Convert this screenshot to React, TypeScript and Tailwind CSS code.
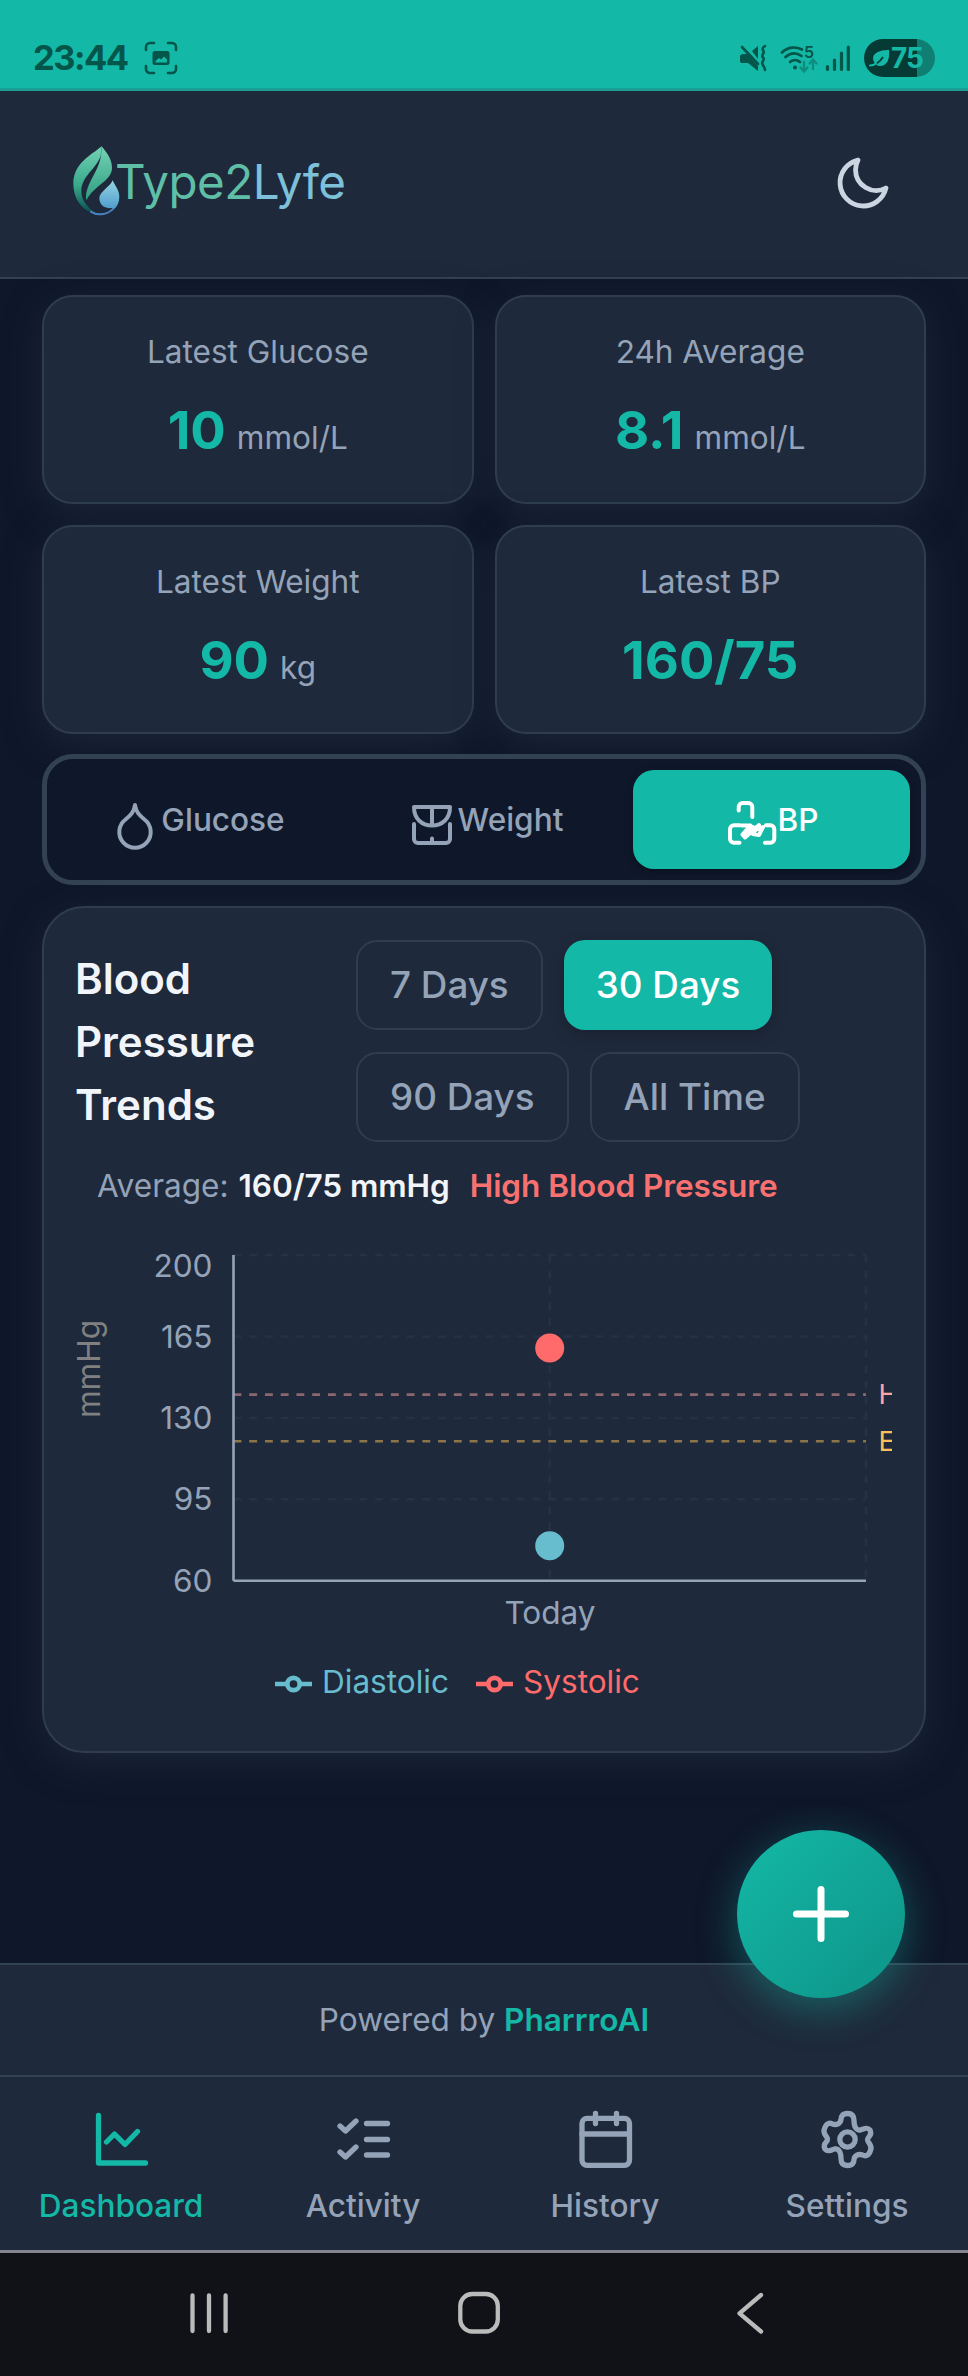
import type { ReactNode } from "react";

function StatusBar() {
  return (
    <div className="flex h-[91px] items-center justify-between border-b-[3px] border-[#1b9f94] bg-[#14b8a6] pt-[28px] pr-[33px] pl-[33px] text-[#04554a]">
      <div className="flex items-center">
        <span className="w-[111px] text-[34.5px] leading-[36px] font-bold tracking-[-1.5px]">23:44</span>
        <svg width="34" height="34" viewBox="0 0 34 34" fill="none" stroke="currentColor" strokeWidth="2.6" strokeLinecap="round">
          <path d="M2 9V6a4 4 0 0 1 4-4h4M24 2h4a4 4 0 0 1 4 4v3M32 25v3a4 4 0 0 1-4 4h-4M10 32H6a4 4 0 0 1-4-4v-3" />
          <path
            d="M11 10h12a2.5 2.5 0 0 1 2.5 2.500v9a2.500 2.500 0 0 1-2.500 2.500h-12a2.500 2.500 0 0 1-2.500-2.500v-9a2.500 2.500 0 0 1 2.500-2.500zM11.500 21.500h11.500v-3l-3-3-3 3-2-1.500-3.500 3z"
            fill="currentColor"
            fillRule="evenodd"
            stroke="none"
          />
        </svg>
      </div>
      <div className="flex items-center">
        <svg width="28" height="28" viewBox="0 0 28 28" fill="none" stroke="currentColor">
          <path d="M1 11.500l2.500-1.500h5L19 22v5L9 19H3a2 2 0 0 1-2-2zM13 7l6-5v13z" fill="currentColor" stroke="none" />
          <path d="M3 3l16 17" strokeWidth="2.600" strokeLinecap="round" />
          <path d="M26 2c-6 4 1 4-2 8s3 3 0 7 2 4 2 9" strokeWidth="2.600" strokeLinecap="round" />
        </svg>
        <svg className="ml-[13px] overflow-visible" width="38" height="29" viewBox="0 0 38 29" fill="none" stroke="currentColor" strokeLinecap="round">
          <path d="M2 8.500c6-6 14-6 20-3M5.500 13c5-4.500 11-4.500 16-1M10 18c3-2.500 7-2.500 10 0" strokeWidth="2.700" />
          <circle cx="15" cy="23.500" r="2" fill="currentColor" stroke="none" />
          <path d="M24 18v9M20.500 23.500l3.500 4 3.500-4M33 25V16M29.500 19.500l3.500-4 3.500 4" stroke="#0e8d7f" strokeWidth="2.300" />
          <text x="24" y="14" fontSize="16" fontWeight="600" fill="currentColor" stroke="none">5</text>
        </svg>
        <svg className="ml-[7px]" width="26" height="28" viewBox="0 0 26 28" stroke="currentColor" strokeWidth="3.200" strokeLinecap="round">
          <path d="M2.500 22.500v3M9.500 16v9.500M16.500 9v16.500M23.300 3v22.500" />
        </svg>
        <div className="ml-[13px] flex h-[38px] w-[71px] items-center rounded-full bg-[linear-gradient(90deg,#053b34_0_53px,#0f7f73_53px)] pl-[5px] text-[#14b8a6]">
          <svg width="22" height="20" viewBox="0 0 22 20">
            <path d="M5 14C1 5 11 2 20 2c1 9-2 16-9 16-2 0-4-1-5-2z" fill="currentColor" />
            <path d="M1 18c4 0 10-4 13-9" fill="none" stroke="#053b34" strokeWidth="1.800" />
            <path d="M1 17.500c2 0 4-.5 6-2" fill="none" stroke="currentColor" strokeWidth="2" strokeLinecap="round" />
          </svg>
          <span className="text-[28px] leading-[36px] font-bold tracking-[-1px]">75</span>
        </div>
      </div>
    </div>
  );
}

function Header() {
  return (
    <header className="flex h-[188px] items-center justify-between border-b-2 border-[#334155] bg-[#1e293b] pr-[76px] pl-[72px]">
      <div className="flex items-center">
        <svg width="50" height="72" viewBox="36 44 150 216" className="-mt-[6px]">
          <defs>
            <linearGradient id="leaf" x1="0" y1="0" x2="0" y2="1">
              <stop offset="0" stopColor="#74d2b4" />
              <stop offset="0.600" stopColor="#37a88a" />
              <stop offset="1" stopColor="#0b4f50" />
            </linearGradient>
            <linearGradient id="blade" x1="0" y1="0" x2="0" y2="1">
              <stop offset="0" stopColor="#74d2b4" />
              <stop offset="1" stopColor="#2f9e80" />
            </linearGradient>
            <linearGradient id="drop" x1="0" y1="0" x2="0" y2="1">
              <stop offset="0" stopColor="#96d4e4" />
              <stop offset="1" stopColor="#4d9bcb" />
            </linearGradient>
          </defs>
          <path d="M125 48C95 74 40 98 40 160C40 202 62 234 92 246L97 241C78 226 64 206 64 182C64 140 106 118 122 78Z" fill="url(#leaf)" />
          <path d="M125 48C145 72 156 90 156 112C156 152 104 162 79 210C72 164 114 130 123 76Z" fill="url(#blade)" />
          <path d="M158 150C166 168 178 180 178 200C178 216 172 228 162 237L154 233C132 236 118 222 118 204C118 184 150 170 158 150Z" fill="url(#drop)" />
          <path d="M91 243C110 256 140 256 161 234" fill="none" stroke="#4a83c2" strokeWidth="6" />
        </svg>
        <span className="-mt-[5px] -ml-[7px] text-[47.5px] leading-[60px] font-normal tracking-[-0.5px] text-[#5fbfa6]">
          Type2<span className="text-[#7cc0da]">Lyfe</span>
        </span>
      </div>
      <svg width="58" height="58" viewBox="0 0 24 24" fill="none" stroke="#cbd5e1" strokeWidth="2" strokeLinejoin="round" className="-mt-[2px]">
        <path d="M21.500 14.078A8.557 8.557 0 0 1 8.918 6.525c0-1.455.363-2.825 1.004-4.025A9.627 9.627 0 1 0 21.500 14.078Z" />
      </svg>
    </header>
  );
}

function StatCard({ label, value, unit }: { label: string; value: string; unit?: string }) {
  return (
    <div className="flex h-[209px] flex-col items-center rounded-[31px] border-2 border-[#2f3d4f] bg-[#1e293b] pt-[31px] shadow-[0_10px_36px_rgba(30,41,59,0.8)]">
      <div className="text-[31.56px] leading-[48px] text-[#94a3b8]">{label}</div>
      <div className="mt-[14px] flex items-baseline gap-[11px] leading-[80px]">
        <span className="text-[52.6px] font-bold text-[#14b8a6]">{value}</span>
        {unit && <span className="text-[31.56px] text-[#94a3b8]">{unit}</span>}
      </div>
    </div>
  );
}

function MetricTab({ label, active, children }: { label: string; active?: boolean; children: ReactNode }) {
  return (
    <button
      className={
        active
          ? "flex flex-1 items-center justify-center rounded-[21px] bg-[#14b8a6] text-white shadow-[0_3px_8px_rgba(0,0,0,0.3)]"
          : "flex flex-1 items-center justify-center text-[#94a3b8]"
      }
    >
      <svg className="mt-3" width="54" height="54" viewBox="0 0 54 54" fill="none" stroke="currentColor" strokeWidth="4" strokeLinecap="round" strokeLinejoin="round">
        {children}
      </svg>
      <span className="-ml-px text-[31.56px] leading-[48px] font-medium">{label}</span>
    </button>
  );
}

function RangeButton({ label, active }: { label: string; active?: boolean }) {
  return (
    <button
      className={
        active
          ? "h-[90px] rounded-[21px] bg-[#14b8a6] px-[32px] text-[36.8px] font-medium text-white shadow-[0_5px_16px_rgba(0,0,0,0.2)]"
          : "h-[90px] rounded-[21px] border-2 border-[#2f3d4f] px-[32px] text-[36.8px] font-medium text-[#94a3b8]"
      }
    >
      {label}
    </button>
  );
}

const ticks = [
  { value: 200, y: 1276.6 },
  { value: 165, y: 1348 },
  { value: 130, y: 1429 },
  { value: 95, y: 1510 },
  { value: 60, y: 1591.8 },
];

function PressureChart() {
  return (
    <svg className="-ml-[10px] block" width="826" height="410" viewBox="66 1230 826 410" fontSize="31.56">
      <g stroke="#253246" strokeWidth="2.600" strokeDasharray="7.870 7.870">
        <path d="M233.500 1255H866M233.500 1336.500H866M233.500 1418H866M233.500 1499.300H866" />
        <path d="M549.700 1255V1580.700M866 1255V1580.700" />
      </g>
      <g strokeWidth="2.600" strokeDasharray="7.870 7.870" strokeOpacity="0.500">
        <path d="M233.500 1394.600H866" stroke="#fca5a5" />
        <path d="M233.500 1441.200H866" stroke="#fbbf5c" />
      </g>
      <path d="M233.500 1255V1580.700M233.500 1580.700H866" stroke="#94a3b8" strokeWidth="2.600" fill="none" />
      <g fill="#94a3b8">
        {ticks.map((t) => (
          <text key={t.value} x="212.500" y={t.y} textAnchor="end">{t.value}</text>
        ))}
        <text x="550" y="1623.600" textAnchor="middle">Today</text>
      </g>
      <text transform="translate(100 1369) rotate(-90)" textAnchor="middle" fill="#808080">mmHg</text>
      <text x="878.500" y="1404.200" fontSize="27.500" fill="#fca5a5">H</text>
      <text x="878.500" y="1450.500" fontSize="27.500" fill="#fbbf5c">E</text>
      <circle cx="549.700" cy="1348" r="14.500" fill="#ff6b6b" />
      <circle cx="549.700" cy="1545.800" r="14.500" fill="#67bccd" />
    </svg>
  );
}

function LegendItem({ label, className }: { label: string; className: string }) {
  return (
    <div className={className}>
      <svg width="37" height="18" viewBox="0 0 37 18" fill="none" stroke="currentColor" strokeWidth="4.700" className="mt-[4px]">
        <path d="M0 9h12.500M24.500 9H37" />
        <circle cx="18.500" cy="9" r="6.200" />
      </svg>
      <span className="text-[31.56px] leading-[40px]">{label}</span>
    </div>
  );
}

function NavItem({ label, active, children }: { label: string; active?: boolean; children: ReactNode }) {
  return (
    <button className={active ? "flex flex-1 flex-col items-center pt-[31px] text-[#14b8a6]" : "flex flex-1 flex-col items-center pt-[31px] text-[#94a3b8]"}>
      <svg width="63" height="63" viewBox="0 0 63 63" fill="none" stroke="currentColor" strokeWidth="5.300" strokeLinecap="round" strokeLinejoin="round">
        {children}
      </svg>
      <span className="mt-[12px] text-[31.56px] leading-[46px] font-medium">{label}</span>
    </button>
  );
}

export default function App() {
  return (
    <div className="relative flex h-[2376px] w-[968px] flex-col overflow-hidden bg-[#0f172a] font-['Inter',sans-serif]">
      <StatusBar />
      <Header />

      <main className="flex flex-1 flex-col px-[42px] pt-[16px]">
        <div className="grid grid-cols-2 gap-[21px]">
          <StatCard label="Latest Glucose" value="10" unit="mmol/L" />
          <StatCard label="24h Average" value="8.1" unit="mmol/L" />
          <StatCard label="Latest Weight" value="90" unit="kg" />
          <StatCard label="Latest BP" value="160/75" />
        </div>

        <div className="z-10 mt-[20px] flex h-[131px] gap-[10.5px] rounded-[31px] border-[5px] border-[#334155] bg-[#0f172a] p-[11px]">
          <MetricTab label="Glucose">
            <path d="M27 6C28 13 31 16 36.500 20.500A15.700 15.700 0 1 1 17.500 20.500C23 16 26 13 27 6Z" />
          </MetricTab>
          <MetricTab label="Weight">
            <path d="M9 8H45C45 20 37 26.500 27 26.500S9 20 9 8ZM27 8V26.500M9 25V40a4 4 0 0 0 4 4H41a4 4 0 0 0 4-4V25M27 39.500V43" />
          </MetricTab>
          <MetricTab label="BP" active>
            <path d="M13.700 11.500V8a4 4 0 0 1 4-4h5.600a4 4 0 0 1 4 4V18" />
            <path d="M15 26.300H9a4 4 0 0 0-4 4V39.700a4 4 0 0 0 4 4h5.500M41 26.300h4.300a4 4 0 0 1 4 4V39.700a4 4 0 0 1-4 4H40" />
            <path d="M17 26.500H25.500L17.500 35.500L20 38.500L34 26L28 35L34 36L38 28L30 31L24 34L20 34L28 28" />
          </MetricTab>
        </div>

        <section className="mt-[21px] h-[847px] rounded-[42px] border-2 border-[#2f3d4f] bg-[#1e293b] px-[32px] pt-[32px] shadow-[0_10px_36px_rgba(30,41,59,0.8)]">
          <div className="flex items-center">
            <h2 className="w-[280px] pr-[80px] text-[42px] leading-[63px] font-semibold text-[#f1f5f9]">
              <span className="-ml-px block">Blood Pressure Trends</span>
            </h2>
            <div className="flex flex-1 flex-wrap gap-x-[21px] gap-y-[22px]">
              <RangeButton label="7 Days" />
              <RangeButton label="30 Days" active />
              <RangeButton label="90 Days" />
              <RangeButton label="All Time" />
            </div>
          </div>
          <div className="mt-[20px] flex h-[48px] items-center pl-[21px] text-[31.56px] leading-[48px]">
            <span className="text-[#94a3b8]">Average:</span>
            <span className="ml-[10px] font-semibold tracking-[-0.080px] text-[#f1f5f9]">160/75 mmHg</span>
            <span className="ml-[20px] font-semibold tracking-[-0.060px] text-[#f87171]">High Blood Pressure</span>
          </div>
          <div className="mt-[20px]">
            <PressureChart />
          </div>
          <div className="mt-[22px] flex gap-[27px] pl-[199px]">
            <LegendItem label="Diastolic" className="flex items-center gap-[10px] text-[#67bccd]" />
            <LegendItem label="Systolic" className="flex items-center gap-[10px] text-[#ff6b6b]" />
          </div>
        </section>
      </main>

      <footer className="flex h-[112px] items-center justify-center border-t-2 border-[#334155] bg-[#1e293b] text-[31.56px] text-[#94a3b8]">
        <span>
          Powered by <span className="font-semibold text-[#14b8a6]">PharrroAI</span>
        </span>
      </footer>

      <nav className="flex h-[175px] border-t-2 border-[#334155] bg-[#1e293b]">
        <NavItem label="Dashboard" active>
          <path d="M8.500 7.500V55H55.500M16.500 34L24.500 26L35 36.500L47.500 23.500" />
        </NavItem>
        <NavItem label="Activity">
          <path d="M8 18L13.500 23L24 13M8 44L13.500 49L24 39M34.500 15.500H55.500M34.500 31.500H55.500M34.500 47H55.500" />
        </NavItem>
        <NavItem label="History">
          <rect x="8" y="10.300" width="47.500" height="47" rx="5" />
          <path d="M8 26H55.500M21.500 5.300V15.500M42.500 5.300V15.500" />
        </NavItem>
        <NavItem label="Settings">
          <g transform="translate(31.5 31.5)">
            <circle r="7.700" />
            <path d="M0 -26C5 -26 6.500 -23 6.500 -19C6.500 -12 9 -9 13 -9.500C17 -10.500 19.500 -13 22.500 -9.500C25.500 -4 20 -3 20 0C20 4 25.500 5 23 11C21 16.500 18 17 15 15.500C11 14 7 16 6.500 20C6.500 23 5 26 0 26C-5 26 -6.500 23 -6.500 19C-6.500 12 -9 9 -13 9.500C-17 10.500 -19.500 13 -22.500 9.500C-25.500 4 -20 3 -20 0C-20 -4 -25.500 -5 -23 -11C-21 -16.500 -18 -17 -15 -15.500C-11 -14 -7 -16 -6.500 -20C-6.500 -23 -5 -26 0 -26Z" />
          </g>
        </NavItem>
      </nav>

      <div className="flex h-[126px] items-center border-t-[3px] border-[#83858f] bg-[#111217]">
        <svg width="968" height="123" viewBox="0 2253 968 123" fill="none" stroke="#bbbbbb" strokeWidth="4.300" strokeLinecap="round" strokeLinejoin="round">
          <path d="M192.500 2295.500V2331M209 2295.500V2331M225.600 2295.500V2331" />
          <rect x="460.300" y="2294" width="37.500" height="37.500" rx="12" />
          <path d="M761 2295L739.500 2313.300L761 2331.500" />
        </svg>
      </div>

      <button className="absolute top-[1830px] left-[737px] z-20 flex size-[168px] items-center justify-center rounded-full bg-linear-135 from-[#14b8a6] to-[#0d9488] shadow-[0_11px_42px_rgba(20,184,166,0.4)]">
        <svg width="64" height="64" viewBox="0 0 64 64" stroke="#ffffff" strokeWidth="7" strokeLinecap="round">
          <path d="M7.500 32H56.500M32 7.500V56.500" />
        </svg>
      </button>
    </div>
  );
}
